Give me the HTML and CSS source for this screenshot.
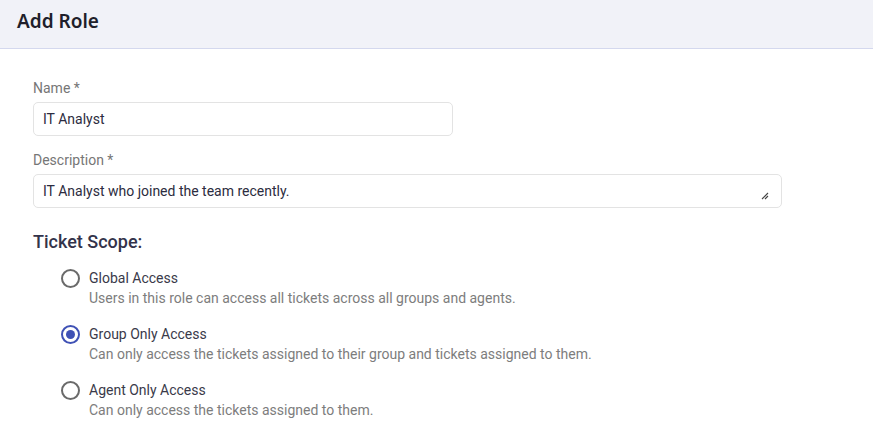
FILE: index.html
```html
<!DOCTYPE html>
<html>
<head>
<meta charset="utf-8">
<link rel="stylesheet" href="styles.css">
</head>
<body>
<header class="topbar"><h1 class="title">Add Role</h1></header>
<main class="form">
  <div class="field field-name">
    <label class="label">Name *</label>
    <div class="input name-input">IT Analyst</div>
  </div>
  <div class="field">
    <label class="label">Description *</label>
    <div class="input textarea">IT Analyst who joined the team recently.
      <svg class="grip" width="8" height="8" viewBox="0 0 8 8"><path d="M7 1 L1 7 M7 4 L4 7" stroke="#444" stroke-width="1.1" fill="none"/></svg>
    </div>
  </div>
  <h2 class="section">Ticket Scope:</h2>
  <div class="options">
    <div class="option">
      <span class="radio"></span>
      <div class="opt-text">
        <div class="opt-title">Global Access</div>
        <div class="opt-desc">Users in this role can access all tickets across all groups and agents.</div>
      </div>
    </div>
    <div class="option">
      <span class="radio checked"></span>
      <div class="opt-text">
        <div class="opt-title">Group Only Access</div>
        <div class="opt-desc">Can only access the tickets assigned to their group and tickets assigned to them.</div>
      </div>
    </div>
    <div class="option">
      <span class="radio"></span>
      <div class="opt-text">
        <div class="opt-title">Agent Only Access</div>
        <div class="opt-desc">Can only access the tickets assigned to them.</div>
      </div>
    </div>
  </div>
</main>
</body>
</html>
```
FILE: styles.css
```css
* { box-sizing: border-box; }
html, body { margin: 0; padding: 0; background: #fff; }
body { font-family: Roboto, "Liberation Sans", sans-serif; width: 873px; height: 442px; overflow: hidden; }
.topbar {
  height: 49px;
  background: #f1f2f8;
  border-bottom: 1px solid #d4d8ee;
  padding: 0 17px;
  display: flex;
  align-items: center;
}
.title {
  margin: 0;
  font-family: "Noto Sans", "Open Sans", sans-serif;
  font-size: 19px;
  font-weight: 600;
  color: #1f1f2b;
  position: relative;
  top: -3px;
}
.form { padding: 30px 0 0 33px; }
.field { margin-bottom: 14px; }
.field-name { margin-bottom: 15px; }
.label {
  display: block;
  font-size: 14px;
  color: #767676;
  line-height: 18px;
  margin-bottom: 5px;
}
.input {
  height: 34px;
  border: 1px solid #e3e3e3;
  border-radius: 5px;
  padding: 0 10px 0 9px;
  font-size: 14px;
  color: #2c2c40;
  display: flex;
  align-items: center;
  position: relative;
}
.name-input { width: 420px; }
.textarea { width: 749px; }
.grip { position: absolute; right: 12px; bottom: 7px; }
.section {
  margin: 22px 0 0 0;
  font-size: 18px;
  font-weight: 500;
  color: #33334a;
  line-height: 24px;
}
.options { padding: 15px 0 0 28px; display: flex; flex-direction: column; gap: 18px; }
.option { display: flex; align-items: flex-start; gap: 9px; }
.radio {
  width: 19px; height: 19px;
  border: 2px solid #6a6a6a;
  border-radius: 50%;
  flex: none;
  display: flex; align-items: center; justify-content: center;
}
.radio.checked { border-color: #3f51b5; }
.radio.checked::after {
  content: "";
  width: 9px; height: 9px; border-radius: 50%;
  background: #3f51b5;
}
.opt-title { font-size: 14px; color: #3a3a4a; line-height: 18px; }
.opt-desc { font-size: 14px; color: #7d7d7d; line-height: 18px; margin-top: 2px; }
```
